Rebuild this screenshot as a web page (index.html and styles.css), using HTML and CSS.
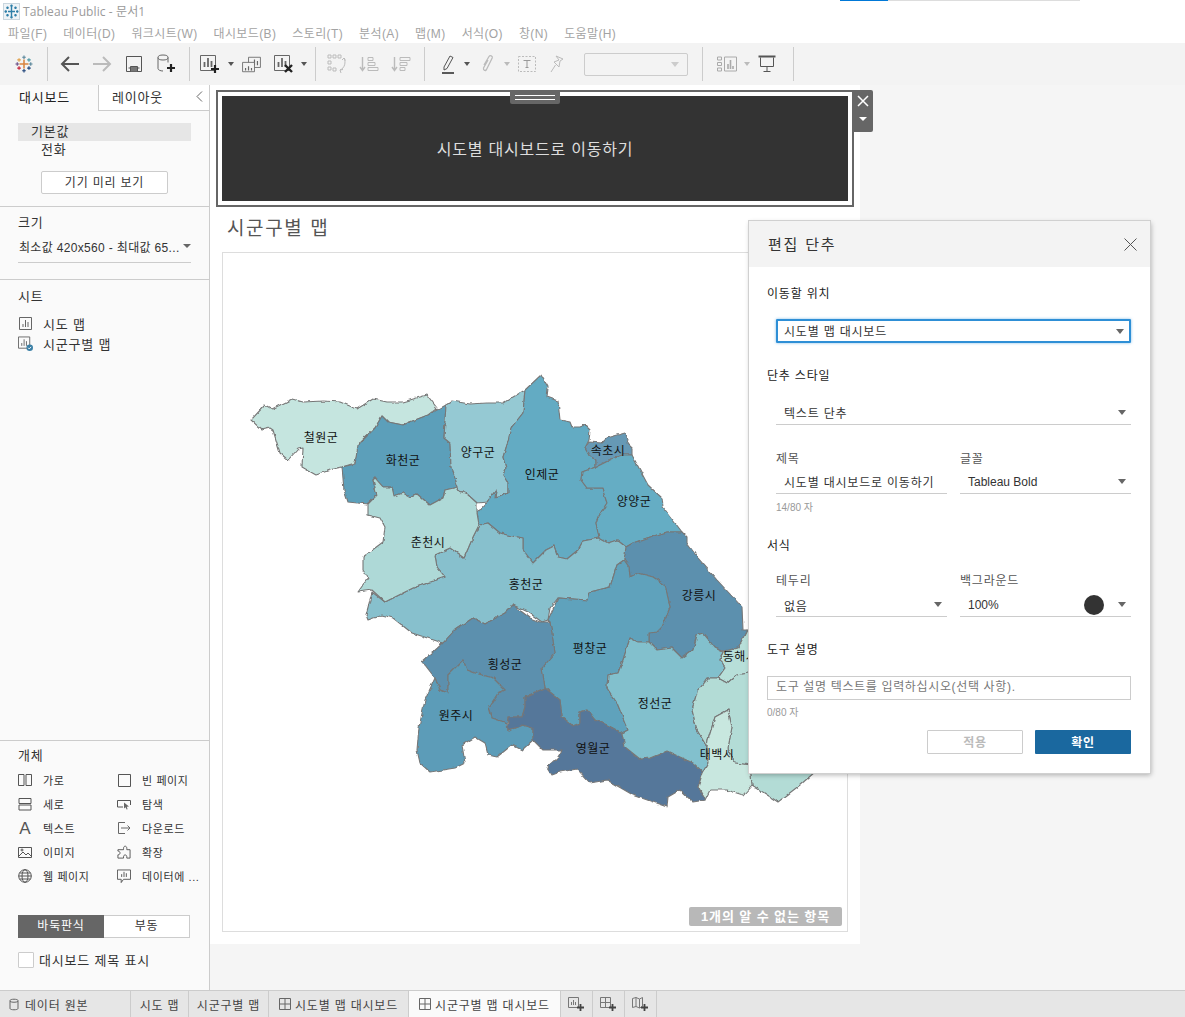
FILE: index.html
```html
<!DOCTYPE html>
<html lang="ko">
<head>
<meta charset="utf-8">
<title>Tableau Public - 문서1</title>
<link rel="stylesheet" href="styles.css">
</head>
<body>
<div class="app">
  <header class="titlebar">
    <svg class="applogo" width="17" height="17" viewBox="0 0 17 17"><rect x=".5" y=".5" width="16" height="16" fill="#eef3f6" stroke="#c9d6de"/><g stroke="#2f7fa8" stroke-width="1.4"><path d="M8.5 4v9M5 8.5h7"/><path d="M8.5 1.5v2.5M7.3 2.7h2.400M8.500 13v2.500M7.300 14.300h2.400M1.500 8.500h2.500M2.700 7.300v2.400M13 8.500h2.500M14.300 7.300v2.400M4.500 3.500v2.400M3.300 4.700h2.400M12.500 3.500v2.400M11.300 4.700h2.400M4.500 11v2.400M3.300 12.200h2.400M12.500 11v2.400M11.300 12.200h2.400"/></g></svg>
    <span class="apptitle">Tableau Public - 문서1</span>
    <div class="winbar"><i class="winbar-blue"></i><i class="winbar-gray"></i></div>
  </header>
  <nav class="menubar">
    <span>파일(F)</span><span>데이터(D)</span><span>워크시트(W)</span><span>대시보드(B)</span><span>스토리(T)</span><span>분석(A)</span><span>맵(M)</span><span>서식(O)</span><span>창(N)</span><span>도움말(H)</span>
  </nav>
  <div class="toolbar">
    <div class="ti w46"><svg width="18" height="18" viewBox="0 0 20 20" fill="none" stroke-width="1.300"><path d="M10 5v10M5 10h10" stroke="#d9843f" stroke-width="1.700"/><path d="M10 .5v4M8 2.500h4" stroke="#5b879b"/><path d="M10 15.500v4M8 17.500h4" stroke="#1f447a"/><path d="M.5 10h4M2.500 8v4" stroke="#6b4f86"/><path d="M15.500 10h4M17.500 8v4" stroke="#5b879b"/><path d="M4.500 3.500v4M2.500 5.500h4" stroke="#e0a04a"/><path d="M15.500 3.500v4M13.500 5.500h4" stroke="#4f9aa5"/><path d="M4.500 12.500v4M2.500 14.500h4" stroke="#c72037"/><path d="M15.500 12.500v4M13.500 14.500h4" stroke="#1f447a"/></svg></div>
    <i class="sep"></i>
    <div class="ti m6"><svg width="20" height="18" viewBox="0 0 20 18" fill="none" stroke="#555" stroke-width="2"><path d="M19 9H2M9 2 2 9l7 7"/></svg></div>
    <div class="ti"><svg width="20" height="18" viewBox="0 0 20 18" fill="none" stroke="#bbb" stroke-width="2"><path d="M1 9h17M11 2l7 7-7 7"/></svg></div>
    <div class="ti"><svg width="16" height="16" viewBox="0 0 16 16" fill="none" stroke="#555"><path d="M.5.500h15v15H.5zM2.500 12h11"/><path d="M4.500 15.500V10.500h7v5" fill="#777"/></svg></div>
    <div class="ti"><svg width="20" height="20" viewBox="0 0 20 20" fill="none" stroke="#666"><ellipse cx="7" cy="3.500" rx="5" ry="2.500"/><path d="M2 3.500v11c0 1.500 2.500 2.500 5 2.500M12 3.500v5"/><path d="M15 10v8M11 14h8" stroke="#222" stroke-width="2.200"/></svg></div>
    <i class="sep m7"></i>
    <div class="ti m4"><svg width="20" height="20" viewBox="0 0 20 20" fill="none" stroke="#666"><path d="M.5 1.500h15v15H.5z"/><path d="M4.500 13V8M8 13V4M11.500 13V7" stroke-width="1.800"/><path d="M15 11v8M11 15h8" stroke="#222" stroke-width="2.200"/></svg></div>
    <i class="caret"></i>
    <div class="ti w30"><svg width="19" height="17" viewBox="0 0 22 20" fill="none" stroke="#666"><path d="M7.500 1.500h14v12h-14z" fill="#f3f3f3"/><path d="M11 11V8M14.500 11V4M18 11V6" stroke-width="1.400"/><path d="M.5 7.500h14v11H.5z" fill="#f3f3f3"/><path d="M4 17v-3M7.500 17v-5M11 17v-3" stroke-width="1.400"/></svg></div>
    <div class="ti w30 m3"><svg width="20" height="20" viewBox="0 0 20 20" fill="none" stroke="#666"><path d="M.5 1.500h15v15H.5z"/><path d="M4.500 13V8M8 13V4M11.500 13V7" stroke-width="1.800"/><path d="m11 11 7 7M18 11l-7 7" stroke="#222" stroke-width="2.400"/></svg></div>
    <i class="caret"></i>
    <i class="sep m6"></i>
    <div class="ti m5 dim"><svg width="20" height="20" viewBox="0 0 20 20" fill="none" stroke="#bbb"><path d="M1 1h3v3H1zM6 1h3v3H6zM11 1h3v3h-3zM1 7h3v3H1zM1 13h3v3H1zM6 14h3v3H6z"/><path d="M17 4c2 4 1 10-4 12m0 0 3-.5M13 16l1 3M17 4l-2 2M17 4l1.500 2.500"/></svg></div>
    <div class="ti dim"><svg width="20" height="18" viewBox="0 0 20 18" fill="none" stroke="#bbb"><path d="M3.500 2v13M1 12l2.500 3.500L6 12" stroke-width="1.400"/><path d="M9 2.500h5v3H9zM9 7.500h7v3H9zM9 12.500h10v3H9z"/></svg></div>
    <div class="ti dim"><svg width="20" height="18" viewBox="0 0 20 18" fill="none" stroke="#bbb"><path d="M3.500 2v13M1 12l2.500 3.500L6 12" stroke-width="1.400"/><path d="M9 2.500h10v3H9zM9 7.500h7v3H9zM9 12.500h5v3H9z"/></svg></div>
    <i class="sep m7"></i>
    <div class="ti w28 m9"><svg width="14" height="20" viewBox="0 0 14 20" fill="none" stroke="#555"><path d="m3 13 6-11 3 1.500-6 11-3 1.500z"/><path d="M1 19h12" stroke="#333" stroke-width="1.600"/></svg></div>
    <i class="caret m2"></i>
    <div class="ti w28 m2 dim"><svg width="14" height="20" viewBox="0 0 14 20" fill="none" stroke="#bbb" stroke-width="1.300"><path d="M3 11 8 2.500c1-1.600 4-.5 3.200 1.500L5.500 15.500c-.8 1.600-3.500 1-3-1.500L7 6"/><path d="m4 17 1-1"/></svg></div>
    <i class="caret light"></i>
    <div class="ti w30 dim"><svg width="18" height="16" viewBox="0 0 18 16" fill="none" stroke="#bbb"><path d="M.5.500h17v15H.5z" stroke-dasharray="2 1.500"/><path d="M5.500 4.500h7M9 4.500v7M7.500 11.500h3" stroke="#999"/></svg></div>
    <div class="ti w30 dim"><svg width="14" height="18" viewBox="0 0 14 18" fill="none" stroke="#bbb"><path d="m6 1 7 3-3 2-1 6-5-5 5-2zM5.500 10 1 17"/></svg></div>
    <div class="combo"><i class="caret-in"></i></div>
    <i class="sep m14"></i>
    <div class="ti w30 m9"><svg width="20" height="16" viewBox="0 0 20 16" fill="none" stroke="#aaa"><path d="M.5 1h4v3h-4zM.5 6.500h4v3h-4zM.5 12h4v3h-4zM7.500 1h12v14h-12z"/><path d="M11 13V8M13.500 13V4M16 13v-3" stroke-width="1.600"/></svg></div>
    <i class="caret light"></i>
    <div class="ti w30"><svg width="18" height="18" viewBox="0 0 18 18" fill="none" stroke="#555"><path d="M.5 1.500h17" stroke-width="2"/><path d="M2.500 2.500v9h13v-9M9 11.500v5M5.500 16.500h7"/></svg></div>
    <i class="sep m11"></i>
  </div>

  <div class="workspace">
    <aside class="sidebar">
      <div class="tabs">
        <div class="tab tab-on">대시보드</div>
        <div class="tab tab-off">레이아웃<svg class="chev" width="7" height="11" viewBox="0 0 7 11" fill="none" stroke="#666"><path d="M6 .5 1 5.500l5 5"/></svg></div>
      </div>
      <section class="sec sec-device">
        <div class="dev dev-on">기본값</div>
        <div class="dev dev-sub">전화</div>
        <div class="preview">기기 미리 보기</div>
      </section>
      <section class="sec sec-size">
        <h3>크기</h3>
        <div class="sizesel"><span>최소값 420x560 - 최대값 65...</span><i class="caret-in"></i></div>
      </section>
      <section class="sec-sheets">
        <h3>시트</h3>
        <div class="sheet"><svg width="15" height="15" viewBox="0 0 15 15" fill="none" stroke="#666"><path d="M1.500 1.500h12v12h-12z"/><path d="M5 11V8M7.500 11V4M10 11V6"/></svg>시도 맵</div>
        <div class="sheet"><svg width="16" height="17" viewBox="0 0 16 17" fill="none" stroke="#666"><path d="M.5 1.500h12v12H.5z"/><path d="M4 11V8M6.500 11V4M9 11V6"/><circle cx="12.500" cy="13" r="3.500" fill="#3a7fa5" stroke="none"/><path d="m10.800 13 1.200 1.300 2-2.200" stroke="#fff"/></svg>시군구별 맵</div>
      </section>
      <section class="sec-objects">
        <h3>개체</h3>
        <div class="objgrid">
          <div class="obj"><svg width="14" height="14" viewBox="0 0 14 14" fill="none" stroke="#555"><path d="M.5 1.500h5.500v11H.5zM8 1.500h5.500v11H8z"/></svg>가로</div>
          <div class="obj"><svg width="14" height="14" viewBox="0 0 14 14" fill="none" stroke="#555"><path d="M1.500 1.500h12v12h-12z"/></svg>빈 페이지</div>
          <div class="obj"><svg width="14" height="14" viewBox="0 0 14 14" fill="none" stroke="#555"><path d="M1 1.500h12v5H1zM1 8h12v5H1z"/></svg>세로</div>
          <div class="obj"><svg width="14" height="14" viewBox="0 0 14 14" fill="none" stroke="#555"><path d="M6 10H.5V3.500h13V8"/><path d="m7 5.500 5 4-2.200.3.800 2.400-1 .4-1-2.400-1.600 1.300z" fill="#666" stroke="none"/></svg>탐색</div>
          <div class="obj"><span class="bigA">A</span>텍스트</div>
          <div class="obj"><svg width="14" height="14" viewBox="0 0 14 14" fill="none" stroke="#666"><path d="M8 1.500H1.500v11H8M4 7h9M10.500 4.500 13 7l-2.500 2.500"/></svg>다운로드</div>
          <div class="obj"><svg width="14" height="13" viewBox="0 0 14 13" fill="none" stroke="#555"><path d="M.5 1.500h13v10H.5z"/><path d="m1 10 4-4 3 3 2-2 3 3"/><circle cx="4" cy="4" r="1"/></svg>이미지</div>
          <div class="obj"><svg width="15" height="15" viewBox="0 0 15 15" fill="none" stroke="#555"><path d="M1 4.500h6V3c0-3 3.500-3 3.500 0v1.500H14v9H10.500v-1.500c0-2.500-3.500-2.500-3.500 0v1.500H1V10c3 0 3-4 0-4z"/></svg>확장</div>
          <div class="obj"><svg width="14" height="14" viewBox="0 0 14 14" fill="none" stroke="#555"><circle cx="7" cy="7" r="6.300"/><ellipse cx="7" cy="7" rx="3" ry="6.300"/><path d="M.7 7h12.600M1.500 4h11M1.500 10h11"/></svg>웹 페이지</div>
          <div class="obj"><svg width="15" height="15" viewBox="0 0 15 15" fill="none" stroke="#555"><path d="M.5.500h14v10H7L4.500 14v-3.500h-4z"/><path d="M5 8V5M7.500 8V2.500M10 8V4"/></svg>데이터에 ...</div>
        </div>
        <div class="toggle"><span class="tg tg-on">바둑판식</span><span class="tg">부동</span></div>
        <label class="titlecheck"><i class="cb"></i>대시보드 제목 표시</label>
      </section>
    </aside>

    <main class="canvas">
      <div class="dashboard">
        <div class="btnzone">
          <div class="darkbtn">시도별 대시보드로 이동하기</div>
          <div class="handle"><i></i><i></i></div>
          <div class="zonetools">
            <svg width="12" height="12" viewBox="0 0 12 12" fill="none" stroke="#fff" stroke-width="1.500"><path d="m1 1 10 10M11 1 1 11"/></svg>
            <i class="whitecaret"></i>
          </div>
        </div>
        <h2 class="sheettitle">시군구별 맵</h2>
        <div class="mapframe">
          <svg class="map" viewBox="223 253 624 678" width="624" height="678">
            <defs><filter id="rough" x="-5%" y="-5%" width="110%" height="110%"><feTurbulence type="fractalNoise" baseFrequency="0.16" numOctaves="2" seed="4"/><feDisplacementMap in="SourceGraphic" scale="3.500" xChannelSelector="R" yChannelSelector="G"/></filter></defs>
            <g class="regions" filter="url(#rough)">
              <polygon fill="#c5e5df" points="251,420 265,405 272,409 292,399 303,402 323,401 340,402 357,409 373,399 387,402 403,402 427,395 437,408 428,415 410,422 403,425 388,422 382,416 375,428 360,442 355,463 342,467 333,469 316,475 302,467 303,448 298,449 288,460 280,453 273,430 270,428 262,430"/>
              <polygon fill="#5b9fba" points="446,405 444,438 450,443 451,467 458,487 445,490 443,498 430,505 417,494 410,497 403,493 394,496 392,487 383,487 375,478 373,480 377,495 367,504 348,502 344,490 342,467 355,464 358,445 375,428 382,416 388,422 403,425 410,422 428,415"/>
              <polygon fill="#95c9d3" points="446,405 452,401 470,404 487,403 503,403 525,390 523,413 511,428 508,442 503,457 506,468 503,475 508,483 508,492 503,496 495,498 496,490 487,502 477,503 467,494 457,490 458,487 451,467 450,443 444,438"/>
              <polygon fill="#63abc3" points="541,375 548,387 547,397 558,401 560,420 570,422 572,427 580,427 585,425 590,430 589,440 585,448 590,457 596,460 596,467 582,472 581,480 587,488 602,488 607,503 598,517 596,523 599,538 583,541 578,550 567,559 558,557 554,546 546,550 533,563 523,550 523,538 507,535 500,533 488,523 479,525 477,513 487,502 496,490 495,498 503,496 508,492 508,483 503,475 506,468 503,457 508,442 511,428 523,413 525,390"/>
              <polygon fill="#6699b5" points="585,448 589,442 602,443 607,438 625,433 628,438 627,443 632,448 632,455 623,455 612,459 596,467 596,460 590,457"/>
              <polygon fill="#65adc4" points="596,467 612,459 623,455 632,455 648,485 662,498 663,507 682,532 667,532 647,538 633,543 626,547 617,540 608,543 599,538 596,523 598,517 607,503 602,488 587,488 581,480 582,472"/>
              <polygon fill="#5b90ae" points="626,547 633,543 647,538 667,532 682,532 687,537 687,543 698,558 717,580 742,607 743,630 747,630 738,648 723,651 715,648 703,633 697,635 693,650 682,658 672,648 657,650 649,642 649,633 657,632 662,627 670,607 665,585 653,577 638,573 630,577 629,567 624,560"/>
              <polygon fill="#87c0cd" points="626,547 624,560 617,565 610,587 590,592 588,600 558,598 550,608 548,620 542,622 528,612 513,605 505,613 485,624 473,618 455,630 443,643 412,633 393,618 382,615 368,620 366,615 372,592 385,602 413,588 445,577 437,567 435,555 450,548 464,558 473,537 479,525 488,523 500,533 507,535 523,538 523,550 533,563 546,550 554,546 558,557 567,559 578,550 583,541 599,538 608,543 617,540"/>
              <polygon fill="#aed9d7" points="368,504 377,495 373,480 375,478 383,487 392,487 394,496 403,493 410,497 417,494 430,505 443,498 445,490 458,487 457,490 467,494 477,503 477,513 479,525 473,537 464,558 450,548 435,555 437,567 445,577 413,588 385,602 372,590 358,592 368,578 363,570 363,557 383,542 385,527 380,518 368,515"/>
              <polygon fill="#5ea2bc" points="548,620 558,598 588,600 590,592 610,587 617,565 624,560 629,567 630,577 638,573 653,577 665,585 670,607 662,627 657,632 649,633 649,642 638,642 630,638 623,660 618,673 608,675 607,688 617,703 628,730 622,733 607,725 595,720 587,710 580,712 580,723 573,726 562,717 560,700 547,690 545,688 542,668 555,653 550,622"/>
              <polygon fill="#5b90ae" points="421,663 443,643 455,630 473,618 485,624 505,613 513,605 530,618 540,622 550,622 555,653 542,668 545,688 525,697 525,707 522,717 508,717 507,723 492,718 489,707 498,693 505,690 493,678 475,673 467,670 463,660 448,675 448,693 440,690 435,678 425,665"/>
              <polygon fill="#5b9cb8" points="463,660 467,670 475,673 493,678 505,690 498,693 489,707 492,718 507,723 508,731 523,725 533,728 533,740 522,750 512,745 497,757 488,755 485,743 475,737 462,745 465,763 455,768 430,772 420,763 417,750 419,727 425,700 435,678 440,690 448,693 448,675"/>
              <polygon fill="#55779a" points="508,717 522,717 525,707 525,697 545,688 560,700 562,717 573,726 580,723 580,712 587,710 595,720 607,725 622,733 625,747 640,759 650,758 667,751 693,763 703,772 698,787 705,800 693,802 680,790 668,797 667,807 653,802 633,795 607,780 590,783 577,769 560,772 552,775 547,767 558,757 562,750 543,750 533,740 533,728 523,725 508,731"/>
              <polygon fill="#82c0cd" points="608,675 618,673 623,660 630,638 638,642 649,642 657,650 672,648 682,658 693,650 697,635 703,633 715,648 723,652 720,660 725,668 718,678 708,678 697,692 692,710 697,730 707,747 708,763 703,772 693,763 667,751 650,758 640,759 625,747 622,733 628,730 617,703 607,688"/>
              <polygon fill="#b7dfd9" points="723,652 738,648 747,630 800,630 800,672 755,672 737,675 727,683 718,678 725,668 720,660"/>
              <polygon fill="#b3dcd6" points="718,678 727,683 737,675 755,672 800,672 815,772 800,785 778,802 752,785 750,765 735,763 728,748 732,727 728,710 715,717 708,740 707,747 697,730 692,710 697,692 708,678"/>
              <polygon fill="#c8e7df" points="707,747 708,740 715,717 728,710 732,727 728,748 735,763 750,765 752,785 743,795 727,790 710,790 705,800 698,787 703,772 708,763"/>
            </g>
            <g class="maplabels">
              <text x="321" y="436">철원군</text><text x="403" y="459">화천군</text><text x="478" y="451">양구군</text><text x="542" y="473">인제군</text><text x="608" y="449">속초시</text><text x="634" y="500">양양군</text><text x="428" y="541">춘천시</text><text x="526" y="583">홍천군</text><text x="699" y="594">강릉시</text><text x="590" y="647">평창군</text><text x="505" y="663">횡성군</text><text x="740" y="655">동해시</text><text x="456" y="714">원주시</text><text x="655" y="702">정선군</text><text x="593" y="747">영월군</text><text x="717" y="753">태백시</text>
            </g>
          </svg>
          <div class="unknown">1개의 알 수 없는 항목</div>
        </div>
      </div>

      <div class="dialog">
        <div class="dlghead"><span>편집 단추</span><svg width="13" height="13" viewBox="0 0 13 13" fill="none" stroke="#555"><path d="m.5.500 12 12M12.500.500l-12 12"/></svg></div>
        <div class="dlgbody">
          <h4 class="h-target">이동할 위치</h4>
          <div class="sel sel-focus"><span>시도별 맵 대시보드</span><i class="caret-in"></i></div>
          <h4 class="h-style">단추 스타일</h4>
          <div class="sel sel-line sel-style"><span>텍스트 단추</span><i class="caret-in"></i></div>
          <div class="tworow row-title">
            <div class="cell"><label>제목</label><div class="sel sel-line"><span>시도별 대시보드로 이동하기</span></div><small>14/80 자</small></div>
            <div class="cell"><label>글꼴</label><div class="sel sel-line"><span class="latin">Tableau Bold</span><i class="caret-in"></i></div></div>
          </div>
          <h4 class="h-format">서식</h4>
          <div class="tworow row-format">
            <div class="cell"><label>테두리</label><div class="sel sel-line"><span class="none-text">없음</span><i class="caret-in"></i></div></div>
            <div class="cell"><label>백그라운드</label><div class="sel sel-line"><span class="latin">100%</span><b class="swatch"></b><i class="caret-in"></i></div></div>
          </div>
          <h4 class="h-tip">도구 설명</h4>
          <div class="tipinput">도구 설명 텍스트를 입력하십시오(선택 사항).</div>
          <small class="count0">0/80 자</small>
          <div class="dlgbtns"><span class="btn btn-off">적용</span><span class="btn btn-ok">확인</span></div>
        </div>
      </div>
    </main>
  </div>

  <footer class="sheettabs">
    <div class="st st-src"><svg width="10" height="13" viewBox="0 0 10 13" fill="none" stroke="#666"><path d="M1 2.500C1 .8 9 .8 9 2.500v8C9 12.200 1 12.200 1 10.500zM1 3.500c2 1 6 1 8 0"/></svg>데이터 원본</div>
    <div class="st st-a">시도 맵</div>
    <div class="st st-b">시군구별 맵</div>
    <div class="st st-c"><svg width="12" height="12" viewBox="0 0 12 12" fill="none" stroke="#666"><path d="M.5.500h11v11H.5zM6 .5v11M.5 6h11"/></svg>시도별 맵 대시보드</div>
    <div class="st st-d"><svg width="12" height="12" viewBox="0 0 12 12" fill="none" stroke="#666"><path d="M.5.500h11v11H.5zM6 .5v11M.5 6h11"/></svg>시군구별 맵 대시보드</div>
    <div class="st st-i"><svg width="17" height="15" viewBox="0 0 17 15" fill="none" stroke="#777"><path d="M.5.500h10v10H.5z"/><path d="M3.500 8V5M5.500 8V3M7.500 8V5"/><path d="M12.500 7v7M9 10.500h7" stroke="#444" stroke-width="1.800"/></svg></div>
    <div class="st st-i"><svg width="17" height="15" viewBox="0 0 17 15" fill="none" stroke="#777"><path d="M.5.500h10v10H.5zM5.500.5v10M.5 5.500h10"/><path d="M12.500 7v7M9 10.500h7" stroke="#444" stroke-width="1.800"/></svg></div>
    <div class="st st-i"><svg width="17" height="15" viewBox="0 0 17 15" fill="none" stroke="#777"><path d="M.5 1.500 4 .5 7.500 2 10.500.5v9l-3 1.500L4 9.500.5 10.500zM4 .5v9M7.500 2v9"/><path d="M12.500 7v7M9 10.500h7" stroke="#444" stroke-width="1.800"/></svg></div>
  </footer>
</div>
</body>
</html>
```

FILE: styles.css
```css
* { box-sizing: border-box; }
html, body { margin: 0; padding: 0; }
body {
  font-family: "Liberation Sans", "Noto Sans CJK KR", sans-serif;
  font-size: 13px;
  letter-spacing: .8px;
  color: #333;
  background: #fff;
}
h2, h3, h4 { margin: 0; font-weight: 400; }
small { display: block; letter-spacing: 0; }
.latin { letter-spacing: 0; }

.app { width: 1185px; height: 1017px; display: flex; flex-direction: column; overflow: hidden; }

/* title + menu */
.titlebar { height: 22px; flex: none; display: flex; align-items: center; padding-left: 3px; position: relative; }
.applogo { margin-right: 3px; }
.apptitle { font-family: "Open Sans", "Noto Sans CJK KR", sans-serif; font-size: 12px; color: #9a9a9a; letter-spacing: .1px; }
.winbar { position: absolute; top: 0; left: 840px; display: flex; }
.winbar-blue { width: 48px; height: 1px; background: #0078d7; }
.winbar-gray { width: 192px; height: 1px; background: #ddd; }

.menubar { height: 21px; flex: none; display: flex; gap: 16px; padding-left: 8px; align-items: center; font-size: 12px; letter-spacing: .38px; color: #a3a3a3; }

/* toolbar */
.toolbar { height: 42px; flex: none; background: #f3f3f3; display: flex; align-items: center; }
.ti { width: 32px; height: 42px; flex: none; display: flex; align-items: center; justify-content: center; }
.w46 { width: 47px; }
.w30 { width: 30px; }
.w28 { width: 28px; }
.m2 { margin-left: 2px; }
.m3 { margin-left: 3px; }
.m4 { margin-left: 4px; }
.m5 { margin-left: 5px; }
.m6 { margin-left: 6px; }
.m7 { margin-left: 7px; }
.m9 { margin-left: 9px; }
.m11 { margin-left: 11px; }
.m14 { margin-left: 14px; }
.sep { width: 1px; height: 34px; flex: none; background: #ccc; }
.caret { width: 0; height: 0; flex: none; margin: 0 2px; border: 3.500px solid transparent; border-top: 4px solid #555; border-bottom: 0; }
.caret.m2 { margin-left: 2px; }
.caret.light { border-top-color: #bbb; }
.caret-in { width: 0; height: 0; flex: none; border: 4.500px solid transparent; border-top: 5px solid #666; border-bottom: 0; }
.combo { width: 104px; height: 23px; margin-left: 12px; flex: none; border: 1px solid #ccc; border-radius: 2px; background: #f3f3f3; display: flex; align-items: center; justify-content: flex-end; padding-right: 8px; }
.combo .caret-in { border-top-color: #ccc; }

/* workspace */
.workspace { flex: 1; min-height: 0; display: flex; background: #f5f5f5; }
.sidebar { width: 210px; flex: none; background: #fafafa; border-right: 1px solid #ccc; display: flex; flex-direction: column; }
.tabs { height: 26px; flex: none; display: flex; }
.tab { display: flex; align-items: center; font-size: 13px; position: relative; padding-bottom: 3px; }
.tab-on { width: 98px; padding-left: 19px; color: #222; }
.tab-off { flex: 1; padding-left: 13px; padding-bottom: 2px; background: #fff; border-left: 1px solid #ccc; border-bottom: 1px solid #ccc; }
.chev { position: absolute; right: 6px; top: 6px; }
.sec { border-bottom: 1px solid #ccc; flex: none; }
.sec-device { height: 96px; padding: 12px 18px 0; }
.dev { height: 18px; line-height: 18px; font-size: 13px; }
.dev-on { width: 173px; background: #e6e6e6; padding-left: 13px; }
.dev-sub { padding-left: 23px; }
.preview { width: 127px; height: 23px; margin: 12px 0 0 23px; border: 1px solid #ccc; border-radius: 2px; background: #fff; text-align: center; line-height: 23px; font-size: 12px; }
.sec-size { height: 73px; padding: 7px 18px 0; }
.sec-size h3, .sec-sheets h3, .sec-objects h3 { font-size: 13px; line-height: 18px; color: #333; }
.sizesel { width: 173px; height: 28px; margin-top: 3px; padding-left: 1px; border-bottom: 1px solid #ccc; display: flex; align-items: center; justify-content: space-between; font-size: 12px; letter-spacing: .33px; white-space: nowrap; padding-bottom: 5px; }
.sizesel .caret-in { border-width: 4px; border-top-width: 4px; border-bottom: 0; margin-top: -1px; }
.sec-sheets { flex: 1; padding: 8px 18px 0; min-height: 0; }
.sec-sheets h3 { margin-bottom: 7px; }
.sheet { height: 20px; display: flex; align-items: center; gap: 10px; font-size: 13px; }
.sheet svg { width: 15px; flex: none; }
.sec-objects { height: 250px; flex: none; border-top: 1px solid #ccc; padding: 6px 18px 0; }
.objgrid { display: grid; grid-template-columns: 99px 1fr; grid-auto-rows: 24px; margin-top: 3px; }
.obj { display: flex; align-items: center; gap: 11px; font-size: 11px; letter-spacing: .6px; white-space: nowrap; }
.obj svg, .bigA { width: 14px; flex: none; }
.bigA { font-family: "Liberation Sans", sans-serif; font-size: 17px; color: #555; line-height: 1; text-align: center; letter-spacing: 0; }
.toggle { width: 172px; height: 23px; margin-top: 27px; display: flex; border: 1px solid #ccc; background: #fff; font-size: 12px; }
.tg { flex: 1; text-align: center; line-height: 21px; }
.tg-on { flex: none; width: 86px; margin: -1px 0 -1px -1px; line-height: 23px; background: #666; color: #fff; }
.titlecheck { display: flex; align-items: center; gap: 5px; margin-top: 12px; font-size: 13px; }
.cb { width: 16px; height: 16px; border: 1px solid #ccc; background: #fff; border-radius: 1px; }

/* canvas */
.canvas { flex: 1; min-width: 0; position: relative; }
.dashboard { width: 650px; height: 859px; background: #fff; padding: 5px 6px 0; }
.btnzone { width: 638px; height: 117px; border: 2px solid #666; padding: 4px; background: #fff; position: relative; }
.darkbtn { height: 105px; background: #333; color: #ddd; font-size: 16px; display: flex; align-items: center; justify-content: center; padding-bottom: 2px; }
.handle { position: absolute; top: -1px; left: 292px; width: 50px; height: 13px; background: #666; border-radius: 0 0 2px 2px; display: flex; flex-direction: column; gap: 3px; padding: 4px 5px 0; }
.handle i { height: 1px; background: #fff; }
.zonetools { position: absolute; top: -2px; left: 634px; width: 21px; height: 42px; background: #666; border-radius: 0 2px 2px 0; display: flex; flex-direction: column; align-items: center; padding-top: 5px; }
.whitecaret { width: 0; height: 0; margin-top: 10px; border: 4px solid transparent; border-top: 4px solid #fff; border-bottom: 0; }
.sheettitle { font-size: 19px; line-height: 26px; letter-spacing: 1.6px; color: #555; margin: 9px 0 10px 11px; }
.mapframe { width: 626px; height: 680px; margin-left: 6px; border: 1px solid #ddd; position: relative; background: #fff; }
.map { display: block; }
.regions polygon { stroke: #777; stroke-width: 1.100; stroke-linejoin: round; }
.maplabels text { font-size: 12px; letter-spacing: .5px; fill: #111; text-anchor: middle; dominant-baseline: central; font-family: "Noto Sans CJK KR", sans-serif; }
.unknown { position: absolute; right: 5px; bottom: 5px; width: 153px; height: 19px; background: #b8b8b8; color: #fff; font-weight: 700; font-size: 13px; letter-spacing: .9px; text-align: center; line-height: 19px; border-radius: 2px; white-space: nowrap; }

/* dialog */
.dialog { position: absolute; left: 539px; top: 136px; width: 401px; height: 552px; background: #fff; box-shadow: 0 0 0 1px #d0d0d0, 1px 2px 5px rgba(0, 0, 0, .3); }
.dlghead { height: 46px; background: #f3f3f3; display: flex; align-items: center; justify-content: space-between; padding: 0 13px 0 19px; font-size: 15px; letter-spacing: 1.8px; color: #333; }
.dlghead span { margin-top: -1px; }
.dlgbody { padding: 0 19px 0 18px; position: relative; }
.dlgbody h4 { font-size: 12px; line-height: 16px; color: #222; }
.h-target { padding-top: 19px; box-sizing: content-box; }
.sel { height: 24px; display: flex; align-items: center; justify-content: space-between; padding: 0 5px 0 8px; font-size: 12px; margin-left: 9px; }
.sel-focus { margin-top: 17px; border: 2px solid #2e8fd6; box-shadow: 0 0 3px rgba(46, 143, 214, .6); padding-left: 6px; border-radius: 1px; }
.sel-focus span { margin-top: -2px; }
.h-style { margin-top: 25px; }
.sel-line { border-bottom: 1px solid #ccc; }
.sel-style { margin-top: 17px; }
.tworow { display: flex; gap: 13px; margin-left: 9px; }
.cell { width: 171px; }
.cell .sel { margin-left: 0; height: 24px; }
.cell label { display: block; font-size: 12px; line-height: 16px; color: #555; }
.row-title { margin-top: 26px; }
.row-title .cell label { margin-bottom: 3px; }
.cell small { font-size: 10px; line-height: 14px; color: #999; margin-top: 7px; }
.h-format { margin-top: 23px; }
.row-format { margin-top: 19px; }
.row-format .cell label { margin-bottom: 4px; }
.none-text { margin-top: 2px; }
.swatch { width: 20px; height: 20px; border-radius: 50%; background: #333; margin-left: auto; margin-right: 14px; }
.h-tip { margin-top: 25px; }
.tipinput { height: 24px; margin-top: 18px; border: 1px solid #ccc; padding-left: 8px; line-height: 21px; font-size: 12px; letter-spacing: .65px; color: #777; }
.count0 { font-size: 10px; line-height: 14px; color: #999; margin-top: 6px; }
.dlgbtns { display: flex; justify-content: flex-end; gap: 12px; margin-top: 10px; }
.btn { width: 96px; height: 24px; text-align: center; font-size: 12px; border-radius: 1px; }
.btn-off { border: 1px solid #ccc; color: #bbb; font-weight: 700; line-height: 24px; }
.btn-ok { background: #1a689f; color: #fff; font-weight: 700; line-height: 26px; }

/* tabs */
.sheettabs { height: 27px; flex: none; display: flex; background: #e6e6e6; border-top: 1px solid #ccc; font-size: 12px; }
.st { height: 100%; display: flex; align-items: center; justify-content: center; gap: 4px; border-right: 1px solid #ccc; white-space: nowrap; color: #444; }
.st-src { width: 131px; justify-content: flex-start; padding-left: 9px; gap: 6px; }
.st-a { width: 58px; }
.st-b { width: 80px; }
.st-c { width: 140px; }
.st-d { width: 152px; background: #fafafa; }
.st-i { width: 32px; }
```
